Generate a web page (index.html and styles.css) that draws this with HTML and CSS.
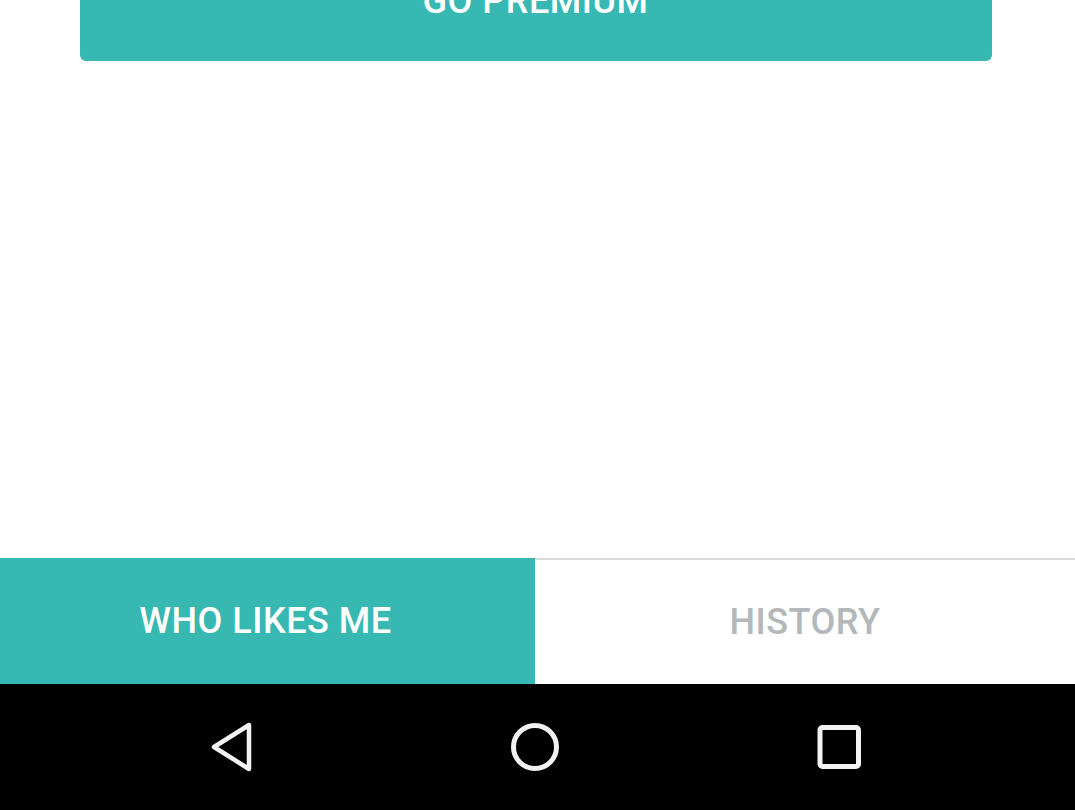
FILE: index.html
```html
<!DOCTYPE html>
<html>
<head>
<meta charset="utf-8">
<link rel="stylesheet" href="styles.css">
</head>
<body>
<div class="screen">
  <main class="content">
    <button class="premium">GO PREMIUM</button>
  </main>
  <nav class="tabs">
    <div class="tab active">WHO LIKES ME</div>
    <div class="tab">HISTORY</div>
  </nav>
  <footer class="sysnav">
    <svg class="nav-icon" width="60" height="60" viewBox="0 0 60 60">
      <polygon points="13,29 48,7 48,51" fill="none" stroke="#f2f2f2" stroke-width="4.5" stroke-linejoin="round"/>
    </svg>
    <svg class="nav-icon" width="60" height="60" viewBox="0 0 60 60">
      <circle cx="30" cy="29" r="21.5" fill="none" stroke="#f2f2f2" stroke-width="5"/>
    </svg>
    <svg class="nav-icon" width="60" height="60" viewBox="0 0 60 60">
      <rect x="11" y="9.5" width="38.5" height="39" rx="2.5" fill="none" stroke="#f2f2f2" stroke-width="5"/>
    </svg>
  </footer>
</div>
</body>
</html>
```
FILE: styles.css
```css
html, body {
  margin: 0;
  padding: 0;
  background: #ffffff;
}
.screen {
  width: 1075px;
  height: 810px;
  display: flex;
  flex-direction: column;
  overflow: hidden;
  font-family: Roboto, "Liberation Sans", Arial, sans-serif;
}
.content {
  height: 558px;
  flex: none;
  display: flex;
  justify-content: center;
  align-items: flex-start;
}
.premium {
  width: 912px;
  height: 100px;
  margin-top: -39px;
  margin-left: -4px;
  border: none;
  border-radius: 6px;
  background: #38b8b2;
  color: #ffffff;
  font-family: Roboto, "Liberation Sans", Arial, sans-serif;
  font-weight: 500;
  font-size: 36px;
  line-height: 36px;
  letter-spacing: 0.5px;
  display: flex;
  align-items: flex-end;
  justify-content: center;
  padding: 0 0 42px 0;
  box-sizing: border-box;
}
.tabs {
  height: 126px;
  flex: none;
  display: flex;
}
.tab {
  display: flex;
  align-items: center;
  justify-content: center;
  font-weight: 500;
  font-size: 36px;
  letter-spacing: 0.5px;
  color: #b3b8bb;
  background: #ffffff;
  border-top: 2px solid #dcdcdc;
  box-sizing: border-box;
  width: 540px;
}
.tab.active {
  width: 535px;
  background: #38b8b2;
  color: #ffffff;
  border-top: none;
  padding-right: 4px;
}
.sysnav {
  height: 126px;
  flex: none;
  background: #000000;
  display: flex;
  align-items: center;
  justify-content: center;
  gap: 244px;
  padding-right: 6px;
}
.nav-icon {
  display: block;
  margin-top: 2px;
}
```
